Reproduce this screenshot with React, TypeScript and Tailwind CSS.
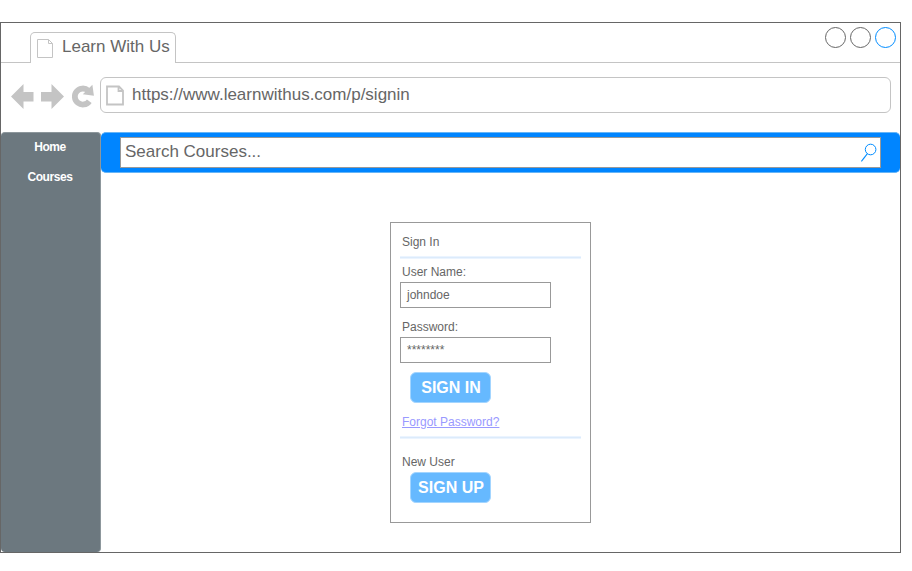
import React from "react";

const font = "font-['Liberation_Sans',Arial,sans-serif]";

function PageIcon({ heavy = false }: { heavy?: boolean }) {
  return (
    <svg width="18" height="21" viewBox="0 0 18 21" fill="none" stroke="#c4c4c4" strokeWidth={heavy ? 2 : 1} className="shrink-0">
      {heavy ? (
        <path d="M1 1.5H13L17 5.5V19.5H1ZM12.5 1.5V6H17" strokeWidth="1.8" />
      ) : (
        <path d="M1.5 1.5H12.5L16.5 5.5V19.5H1.5ZM12.5 1.5V5.5H16.5" />
      )}
    </svg>
  );
}

function Rule() {
  return <div className="h-[3px] w-[181px] border-y border-[#ebf4ff] bg-[#dcebfb]" />;
}

function Button({ children }: { children: React.ReactNode }) {
  return (
    <button className="ml-[10px] flex h-[31px] w-[81px] items-center justify-center rounded-[6px] border border-[#a3d5ff] bg-[#66b9ff] pl-px text-[16px] font-bold leading-[18px] text-white">
      {children}
    </button>
  );
}

export default function App() {
  return (
    <div className={`h-[571px] w-[912px] overflow-hidden bg-white pt-[22px] text-[#666] ${font}`}>
      <div className="flex h-[531px] w-[901px] flex-col border border-[#666]">
        <header className="flex h-[40px] shrink-0 items-end">
          <div className="h-full w-[29px] border-b border-[#c4c4c4]" />
          <div className="flex h-[31px] w-[146px] rounded-t-[5px] border border-b-0 border-[#c4c4c4] pl-[5px] pt-[5px]">
            <PageIcon />
            <span className="ml-[8px] whitespace-nowrap text-[17px] leading-[18px]">Learn With Us</span>
          </div>
          <div className="flex h-full flex-1 justify-end gap-[4px] border-b border-[#c4c4c4] pr-[4px] pt-[4px]">
            <i className="size-[21px] rounded-full border border-[#666]" />
            <i className="size-[21px] rounded-full border border-[#666]" />
            <i className="size-[21px] rounded-full border border-[#008cff]" />
          </div>
        </header>

        <div className="flex h-[69px] shrink-0 pl-[10px] pt-[14px]">
          <svg width="89" height="36" viewBox="11 77 89 36" className="shrink-0" fill="#c4c4c4">
            <path d="M11 96.5L23.5 84V92H33.5V101.5H23.5V109Z" />
            <path d="M64 96.5L51.5 84V92H41V101.5H51.5V109Z" />
            <path d="M89.3 101.2A8 8 0 1 1 88.3 90.7" fill="none" stroke="#c4c4c4" strokeWidth="5.8" />
            <path d="M92.4 84.8L93.9 95.8L82.8 94.2Z" />
          </svg>
          <div className="flex h-[36px] w-[791px] rounded-[6px] border border-[#c4c4c4] pl-[5px] pt-[7px]">
            <PageIcon heavy />
            <span className="ml-[8px] text-[17px] leading-[19px]">https://www.learnwithus.com/p/signin</span>
          </div>
        </div>

        <div className="flex min-h-0 flex-1">
          <nav className="flex w-[100px] shrink-0 flex-col items-center rounded-[4px] border-r border-t border-[#8d979c] bg-[#6c787f] pr-px text-[12px] font-bold leading-[14px] tracking-[-0.4px] text-white">
            <a className="mt-[7px]">Home</a>
            <a className="mt-[16px]">Courses</a>
          </nav>
          <main className="flex flex-1 flex-col">
            <div className="h-[41px] rounded-[5px] border-y border-[#66b5f7] bg-[#0085ff] pl-[19px] pt-[4px]">
              <div className="flex h-[31px] w-[761px] justify-between border border-[#999] bg-white pl-[4px] pr-[2px]">
                <span className="pt-[4px] text-[17px] leading-[19px]">Search Courses...</span>
                <svg width="18" height="29" viewBox="860 138 18 29" fill="none" stroke="#008cff">
                  <circle cx="870.6" cy="149.5" r="5.3" />
                  <path d="M867.2 153.8L861.4 161.4" strokeWidth="1.1" />
                </svg>
              </div>
            </div>
            <section className="ml-[289px] mt-[49px] flex h-[301px] w-[201px] flex-col border border-[#999] pl-[9px] text-[12px] leading-[14px]">
              <h1 className="ml-[2px] mt-[12px]">Sign In</h1>
              <div className="mt-[7px]"><Rule /></div>
              <label className="ml-[2px] mt-[6px]">User Name:</label>
              <div className="mt-[3px] h-[26px] w-[151px] border border-[#999] pl-[6px] pt-[5px]">johndoe</div>
              <label className="ml-[2px] mt-[12px]">Password:</label>
              <div className="mt-[3px] h-[26px] w-[151px] border border-[#999] pl-[6px] pt-[5px]">********</div>
              <div className="mt-[9px]"><Button>SIGN IN</Button></div>
              <a className="ml-[2px] mt-[12px] text-[#9999ff] underline">Forgot Password?</a>
              <div className="mt-[7px]"><Rule /></div>
              <span className="ml-[2px] mt-[16px]">New User</span>
              <div className="mt-[3px]"><Button>SIGN UP</Button></div>
            </section>
          </main>
        </div>
      </div>
    </div>
  );
}
